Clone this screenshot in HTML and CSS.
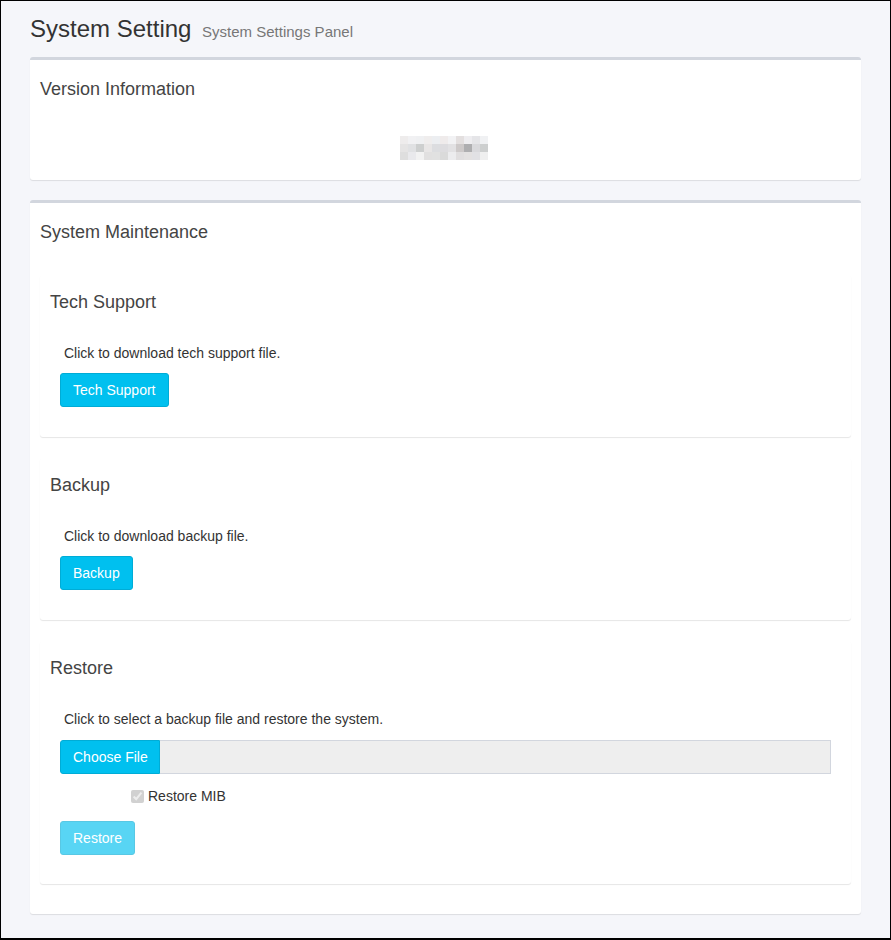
FILE: index.html
```html
<!DOCTYPE html>
<html lang="en">
<head>
<meta charset="utf-8">
<title>System Setting</title>
<link rel="stylesheet" href="styles.css">
</head>
<body>
<div class="frame">
  <section class="content-header">
    <h1>System Setting <small>System Settings Panel</small></h1>
  </section>

  <section class="content">
    <div class="box">
      <div class="box-header"><h3 class="box-title">Version Information</h3></div>
      <div class="box-body version">
        <div class="mosaic" aria-hidden="true">
          <div class="mrow r1"></div>
          <div class="mrow r2"></div>
          <div class="mrow r3"></div>
        </div>
      </div>
    </div>

    <div class="box">
      <div class="box-header"><h3 class="box-title">System Maintenance</h3></div>
      <div class="box-body maint">

        <div class="sub-box">
          <h3 class="sub-title">Tech Support</h3>
          <div class="sub-body">
            <p class="hint">Click to download tech support file.</p>
            <button class="btn" type="button">Tech Support</button>
          </div>
        </div>

        <div class="sub-box">
          <h3 class="sub-title">Backup</h3>
          <div class="sub-body">
            <p class="hint">Click to download backup file.</p>
            <button class="btn" type="button">Backup</button>
          </div>
        </div>

        <div class="sub-box restore-box">
          <h3 class="sub-title">Restore</h3>
          <div class="sub-body">
            <p class="hint">Click to select a backup file and restore the system.</p>
            <div class="file-field">
              <span class="btn file-btn">Choose File</span>
              <span class="file-name"></span>
            </div>
            <label class="check-row">
              <input type="checkbox" checked disabled>
              <span>Restore MIB</span>
            </label>
            <button class="btn" type="button" disabled>Restore</button>
          </div>
        </div>

      </div>
    </div>
  </section>
</div>
</body>
</html>
```

FILE: styles.css
```css
* { box-sizing: border-box; }

html, body {
  margin: 0;
  padding: 0;
}

body {
  font-family: "Liberation Sans", Arial, sans-serif;
  font-size: 14px;
  color: #333;
}

.frame {
  height: 940px;
  border: 1px solid #000;
  border-bottom-width: 2px;
  background: #f5f6fa;
  padding: 0 29px 0 29px;
}

/* page title */
.content-header {
  padding-top: 16px;
}
.content-header h1 {
  margin: 0;
  font-size: 24px;
  line-height: 24px;
  font-weight: 400;
  color: #333;
}
.content-header small {
  margin-left: 4px;
  font-size: 15px;
  color: #777;
}

/* panels */
.box {
  background: #fff;
  border-top: 3px solid #d2d6de;
  border-radius: 3px;
  box-shadow: 0 1px 1px rgba(0, 0, 0, 0.1);
  margin-top: 13px;
}
.box + .box {
  margin-top: 20px;
}
.box-header {
  padding: 18px 10px 0;
}
.box-title {
  margin: 0;
  font-size: 18px;
  line-height: 22px;
  font-weight: 400;
  color: #444;
}

.box-body.version {
  padding: 36px 10px 20px;
  display: flex;
  justify-content: center;
}

/* obscured version string */
.mosaic {
  width: 88px;
  margin-left: -3px;
}
.mrow {
  height: 8px;
}
.r1 {
  background: linear-gradient(to right,
    #eeecec 0 8px, #f1f1f3 8px 16px, #eff0f2 16px 24px, #efeded 24px 32px,
    #eceef1 32px 40px, #efebeb 40px 48px, #f2f2f4 48px 56px, #e3dfdf 56px 64px,
    #eeedf0 64px 72px, #e5e5e8 72px 80px, #f0f1f3 80px 88px);
}
.r2 {
  background: linear-gradient(to right,
    #e5e4e4 0 8px, #e0e1e3 8px 16px, #cdcfcf 16px 24px, #e8e6e6 24px 32px,
    #dcdde0 32px 40px, #dddcdf 40px 48px, #e2e1e3 48px 56px, #cdc9c9 56px 64px,
    #aeaeb0 64px 72px, #d9d9dc 72px 80px, #cdcfcf 80px 88px);
}
.r3 {
  background: linear-gradient(to right,
    #dedede 0 8px, #e9e9ec 8px 16px, #f2f2f2 16px 24px, #e1e0e0 24px 32px,
    #e1e1e1 32px 40px, #dadada 40px 48px, #ececee 48px 56px, #e0dedf 56px 64px,
    #e3e1e1 64px 72px, #e1e1e4 72px 80px, #efefef 80px 88px);
}

.box-body.maint {
  padding: 32px 10px 9px;
}

/* inner sections */
.sub-box {
  background: #fff;
  border-radius: 3px;
  box-shadow: 0 1px 1px rgba(0, 0, 0, 0.1);
  padding: 16px 10px 30px;
  margin-bottom: 21px;
}
.restore-box {
  padding-bottom: 29px;
}
.sub-title {
  margin: 0;
  font-size: 18px;
  line-height: 22px;
  font-weight: 400;
  color: #444;
}
.sub-body {
  padding: 30px 10px 0;
}
.hint {
  margin: 0 0 10px;
  padding-left: 4px;
  line-height: 20px;
}
.restore-box .hint {
  margin-bottom: 11px;
}

/* buttons */
.btn {
  display: inline-block;
  height: 34px;
  padding: 6px 12px;
  font-family: inherit;
  font-size: 14px;
  line-height: 20px;
  color: #fff;
  background: #00c0ef;
  border: 1px solid #00acd6;
  border-radius: 3px;
  cursor: pointer;
}
.btn:disabled {
  opacity: 0.65;
  cursor: not-allowed;
}

/* file picker */
.file-field {
  display: flex;
  height: 34px;
  width: 771px;
}
.file-btn {
  width: 100px;
  border-radius: 3px 0 0 3px;
  white-space: nowrap;
}
.file-name {
  flex: 1;
  background: #eee;
  border: 1px solid #d2d6de;
  border-left: 0;
}

.check-row {
  display: flex;
  align-items: center;
  height: 20px;
  margin: 12px 0 15px;
  padding-left: 71px;
  color: #333;
}
.check-row input {
  width: 13px;
  height: 13px;
  margin: 0 4px 0 0;
}
```
